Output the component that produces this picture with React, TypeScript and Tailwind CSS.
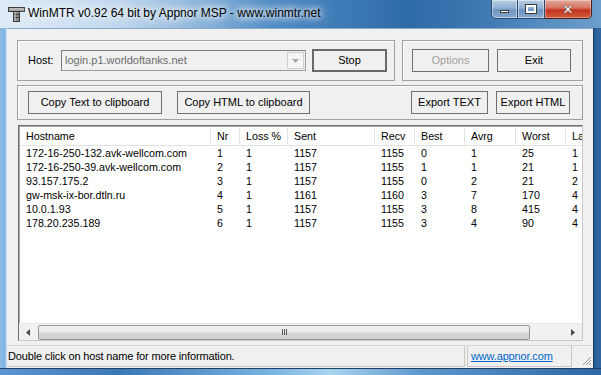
import React from "react";

const cols = [
  { name: "Hostname", w: 190 },
  { name: "Nr", w: 29 },
  { name: "Loss %", w: 48 },
  { name: "Sent", w: 87 },
  { name: "Recv", w: 40 },
  { name: "Best", w: 50 },
  { name: "Avrg", w: 51 },
  { name: "Worst", w: 50 },
  { name: "Last", w: 40 },
];

const rows = [
  ["172-16-250-132.avk-wellcom.com", "1", "1", "1157", "1155", "0", "1", "25", "1"],
  ["172-16-250-39.avk-wellcom.com", "2", "1", "1157", "1155", "1", "1", "21", "1"],
  ["93.157.175.2", "3", "1", "1157", "1155", "0", "2", "21", "2"],
  ["gw-msk-ix-bor.dtln.ru", "4", "1", "1161", "1160", "3", "7", "170", "4"],
  ["10.0.1.93", "5", "1", "1157", "1155", "3", "8", "415", "4"],
  ["178.20.235.189", "6", "1", "1157", "1155", "3", "4", "90", "4"],
];

function Btn({ w, children, disabled, def }: { w: number; children: React.ReactNode; disabled?: boolean; def?: boolean }) {
  return (
    <div
      style={{ width: w }}
      className={
        "flex items-center justify-center bg-[#f0f0f0] " +
        (def ? "h-[23px] border-2 border-[#686868]" : "h-[23px] border border-[#707070]") +
        (disabled ? " text-[#a0a0a0]" : " text-black")
      }
    >
      {children}
    </div>
  );
}

function AppIcon() {
  return (
    <svg width="17" height="16" viewBox="0 0 17 16">
      <rect x="0.5" y="1.5" width="16" height="4" fill="#9a9a9a" stroke="#3a3a3a" />
      <rect x="1.5" y="2.5" width="14" height="1" fill="#d8d8d8" />
      <rect x="5.5" y="5.5" width="6" height="10" fill="#8a8a8a" stroke="#3a3a3a" />
      <rect x="6" y="8" width="5" height="1" fill="#3a3a3a" />
      <rect x="6" y="11" width="5" height="1" fill="#3a3a3a" />
      <rect x="6.5" y="6" width="1" height="9" fill="#cfcfcf" />
    </svg>
  );
}

export default function App() {
  return (
    <div className="w-[601px] h-[375px] overflow-hidden flex flex-col font-['Liberation_Sans',Arial,sans-serif] text-[11px] bg-[linear-gradient(90deg,#b9d4ee_0%,#9cc1e4_20%,#4f8cc5_45%,#2f6aa8_68%,#3f78b2_80%,#6d9fcd_100%)]">
      {/* Title bar */}
      <div className="h-[28px] flex items-start relative bg-[linear-gradient(90deg,rgba(255,255,255,0.55)_0%,rgba(255,255,255,0.35)_20%,rgba(255,255,255,0)_45%,rgba(255,255,255,0)_100%)]">
        <div className="pl-[8px] pt-[6px]">
          <AppIcon />
        </div>
        <div className="pl-[3px] pt-[6px] text-[12px] leading-[15px] text-black font-['Liberation_Sans',Arial,sans-serif] [text-shadow:0_0_6px_#fff,0_0_10px_#fff,0_0_14px_#fff]">
          WinMTR v0.92 64 bit by Appnor MSP - www.winmtr.net
        </div>
        <div className="ml-auto mr-[9px] flex h-[19px]">
          <div className="w-[27px] h-[19px] border border-t-0 border-[#2b4a70] rounded-bl-[5px] bg-[linear-gradient(180deg,#b8cde3_0%,#8fb0d3_45%,#6f94bf_55%,#86a9cf_100%)] flex items-center justify-center shadow-[inset_0_0_0_1px_rgba(255,255,255,0.45)]">
            <div className="w-[9px] h-[3px] bg-white border border-[#3c3c3c] mt-[5px]" />
          </div>
          <div className="w-[27px] h-[19px] border border-t-0 border-l-0 border-[#2b4a70] bg-[linear-gradient(180deg,#b8cde3_0%,#8fb0d3_45%,#6f94bf_55%,#86a9cf_100%)] flex items-center justify-center shadow-[inset_0_0_0_1px_rgba(255,255,255,0.45)]">
            <div className="w-[10px] h-[8px] border-2 border-white outline outline-1 outline-[#3c3c3c] bg-transparent" />
          </div>
          <div className="w-[47px] h-[19px] border border-t-0 border-l-0 border-[#4a1e1a] rounded-br-[5px] bg-[linear-gradient(180deg,#e3a89c_0%,#d6735f_45%,#c2351f_55%,#d25b3b_100%)] flex items-center justify-center shadow-[inset_0_0_0_1px_rgba(255,255,255,0.35)]">
            <span className="text-white font-bold text-[13px] leading-none [text-shadow:0_0_1px_#333,0_0_1px_#333] font-['DejaVu_Sans',sans-serif]">✕</span>
          </div>
        </div>
      </div>

      {/* Middle */}
      <div className="flex flex-1 min-h-0">
        <div className="w-[7px] bg-[linear-gradient(90deg,#8dbde6_0%,#7fb3e0_70%,#d7e8f6_100%)]" />
        <div className="w-[586px] bg-[#f0f0f0] border-t border-[#8aa8c8] flex flex-col">
          <div className="pt-[11px] pl-[10px] flex gap-[7px]">
            {/* Group 1 */}
            <div className="w-[378px] h-[41px] border border-[#a0a0a0] shadow-[inset_1px_1px_0_#fff] flex items-center">
              <span className="pl-[10px] w-[43px]">Host:</span>
              <div className="w-[245px] h-[21px] border border-[#9a9a9a] border-t-[#7a7a7a] border-l-[#7a7a7a] bg-[#f0f0f0] flex items-center">
                <span className="pl-[3px] text-[#6d6d6d] flex-1">login.p1.worldoftanks.net</span>
                <div className="w-[17px] h-[17px] mr-[1px] bg-[#f4f4f4] border border-[#d0d0d0] flex items-center justify-center">
                  <svg width="7" height="4" viewBox="0 0 7 4">
                    <path d="M0 0 H7 L3.5 4 Z" fill="#a8a8a8" />
                  </svg>
                </div>
              </div>
              <div className="ml-[6px]">
                <Btn w={75} def>
                  Stop
                </Btn>
              </div>
            </div>
            {/* Group 2 */}
            <div className="w-[181px] h-[41px] border border-[#a0a0a0] shadow-[inset_1px_1px_0_#fff] flex items-center gap-[8px] pl-[9px]">
              <Btn w={77} disabled>
                Options
              </Btn>
              <Btn w={74}>Exit</Btn>
            </div>
          </div>
          {/* Group 3 */}
          <div className="mt-[4px] ml-[10px] w-[566px] h-[35px] border border-[#a0a0a0] shadow-[inset_1px_1px_0_#fff] flex items-center pl-[10px]">
            <Btn w={134}>Copy Text to clipboard</Btn>
            <div className="ml-[15px]">
              <Btn w={133}>Copy HTML to clipboard</Btn>
            </div>
            <div className="ml-[101px]">
              <Btn w={77}>Export TEXT</Btn>
            </div>
            <div className="ml-[8px]">
              <Btn w={74}>Export HTML</Btn>
            </div>
          </div>
          {/* List */}
          <div className="mt-[5px] ml-[11px] w-[565px] h-[216px] border border-[#6f6f6f] border-r-[#c8c8c8] border-b-[#c8c8c8] bg-white flex flex-col text-[10.7px]">
            <div className="flex-1 min-h-0 overflow-hidden border border-[#a8a8a8] border-r-0 border-b-0">
              <div className="flex h-[19px] border-b border-[#e3e3e3] w-[600px]">
                {cols.map((c, i) => (
                  <div
                    key={c.name}
                    style={{ width: c.w }}
                    className={"shrink-0 pl-[6px] leading-[18px] whitespace-nowrap overflow-hidden " + (i > 0 ? "border-l border-[#e3e3e3]" : "")}
                  >
                    {c.name}
                  </div>
                ))}
              </div>
              <div>
                {rows.map((r, ri) => (
                  <div key={ri} className="flex h-[14px] w-[600px]">
                    {r.map((v, i) => (
                      <div
                        key={i}
                        style={{ width: cols[i].w }}
                        className={"shrink-0 pl-[6px] leading-[14px] whitespace-nowrap overflow-hidden " + (i > 0 ? "ml-[1px] -mr-[1px]" : "")}
                      >
                        {v}
                      </div>
                    ))}
                  </div>
                ))}
              </div>
            </div>
            {/* Scrollbar */}
            <div className="h-[17px] flex items-center bg-[#f0f0f0] border-t border-[#e8e8e8]">
              <div className="w-[18px] h-[16px] flex items-center justify-center">
                <svg width="4" height="7" viewBox="0 0 4 7">
                  <path d="M4 0 V7 L0 3.5 Z" fill="#4a4a4a" />
                </svg>
              </div>
              <div className="ml-[1px] w-[492px] h-[15px] rounded-[2px] border border-[#959595] bg-[linear-gradient(180deg,#f3f3f3_0%,#e8e8e8_45%,#d6d6d6_55%,#cfcfcf_100%)] flex items-center justify-center">
                <div className="flex gap-[1px]">
                  <div className="w-[1px] h-[6px] bg-[#5a5a5a]" />
                  <div className="w-[1px] h-[6px] bg-[#5a5a5a]" />
                  <div className="w-[1px] h-[6px] bg-[#5a5a5a]" />
                </div>
              </div>
              <div className="flex-1" />
              <div className="w-[18px] h-[16px] flex items-center justify-center">
                <svg width="4" height="7" viewBox="0 0 4 7">
                  <path d="M0 0 V7 L4 3.5 Z" fill="#4a4a4a" />
                </svg>
              </div>
            </div>
          </div>
          {/* Status bar */}
          <div className="mt-[4px] flex-1 flex items-stretch border-t border-[#d6d6d6] relative text-[11px] tracking-[-0.15px]">
            <div className="w-[458px] pl-[1px] flex items-center border-r border-[#c8c8c8] border-b border-[#c8c8c8] mb-[1px]">
              Double click on host name for more information.
            </div>
            <div className="ml-[2px] w-[105px] pl-[3px] flex items-center border border-t-0 border-[#c8c8c8] mb-[1px]">
              <span className="text-[#0066cc] underline">www.appnor.com</span>
            </div>
            <div className="flex-1 flex items-end justify-end pr-[1px] pb-[2px]">
              <svg width="11" height="11" viewBox="0 0 11 11">
                <path d="M10 2 L2 10 M10 5 L5 10 M10 8 L8 10" stroke="#9a9a9a" strokeWidth="1" />
              </svg>
            </div>
          </div>
        </div>
        <div className="w-[8px] bg-[linear-gradient(90deg,#16365e_0%,#2d619b_25%,#2f66a2_100%)]" />
      </div>
      {/* Bottom frame */}
      <div className="h-[7px] bg-[linear-gradient(90deg,#5b95cf_0%,#3c78b4_20%,#79b3e0_45%,#a9d4ee_55%,#5e97cc_70%,#2f66a2_100%)] border-t border-[#1e3f66]" />
    </div>
  );
}
